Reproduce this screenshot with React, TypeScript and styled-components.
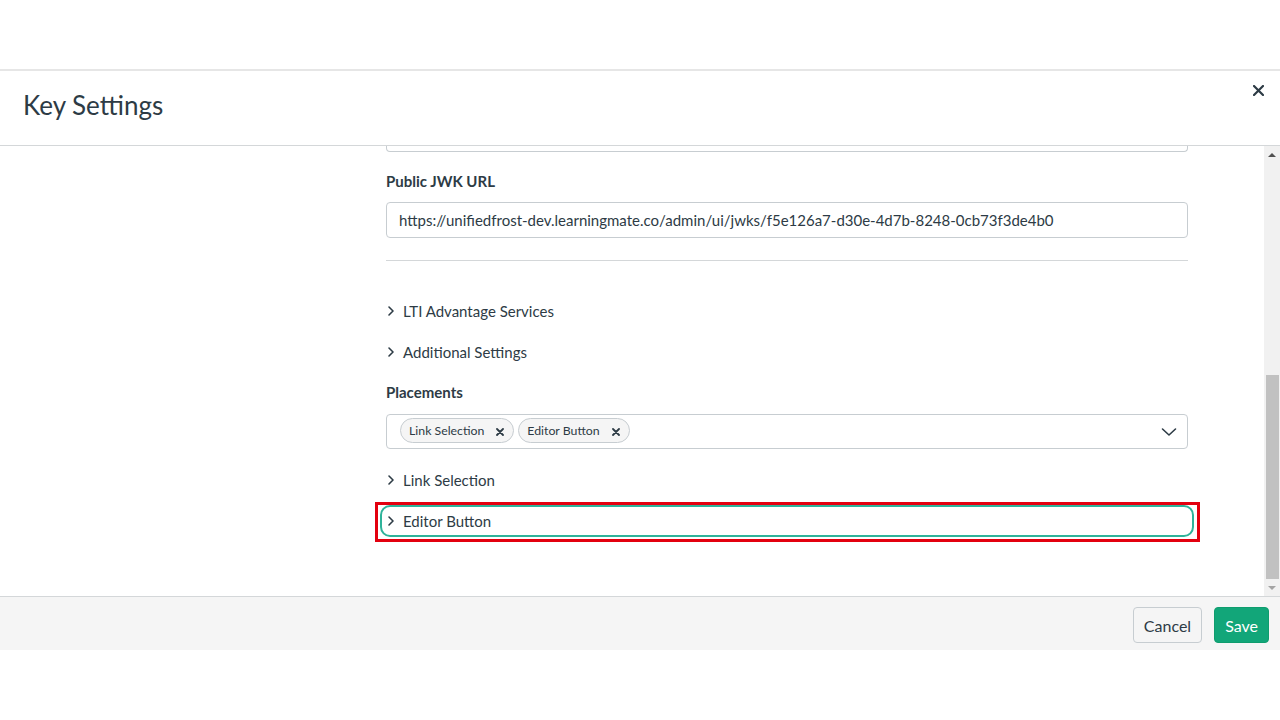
import React from 'react';
import styled, {createGlobalStyle} from 'styled-components';

const TEXT = '#2d3b45';
const BORDER = '#c7cdd1';

const Global = createGlobalStyle`
  html, body {
    margin: 0;
    padding: 0;
    background: #fff;
    font-family: Lato, 'Noto Sans', sans-serif;
    color: ${TEXT};
    -webkit-font-smoothing: antialiased;
  }
`;

const Page = styled.div`
  width: 1280px;
  height: 720px;
  overflow: hidden;
  display: flex;
  flex-direction: column;
`;

const TopSpace = styled.div`
  height: 69px;
  flex: 0 0 auto;
`;

const Modal = styled.div`
  border-top: 2px solid #e6e6e6;
  display: flex;
  flex-direction: column;
`;

const Header = styled.div`
  height: 74px;
  border-bottom: 1px solid #d4d7d9;
  display: flex;
  align-items: center;
  justify-content: space-between;
  padding: 0 14px 0 23px;
`;

const Title = styled.h2`
  margin: 0;
  font-size: 26px;
  font-weight: 400;
  margin-top: -6px;
`;

const CloseBtn = styled.button`
  border: none;
  background: none;
  padding: 0;
  width: 16px;
  height: 16px;
  align-self: flex-start;
  margin-top: 11px;
  color: ${TEXT};
  display: flex;
  align-items: center;
  justify-content: center;
`;

const Body = styled.div`
  height: 450px;
  display: flex;
`;

const Content = styled.div`
  flex: 1;
  overflow: hidden;
  padding-left: 386px;
  padding-right: 76px;
`;

const Column = styled.div`
  width: 802px;
  display: flex;
  flex-direction: column;
`;

const PartialInput = styled.div`
  height: 5px;
  border: 1px solid ${BORDER};
  border-top: none;
  border-radius: 0 0 4px 4px;
`;

const Label = styled.div<{ top: number }>`
  margin-top: ${p => p.top}px;
  font-size: 15px;
  font-weight: 700;
  line-height: 20px;
`;

const Input = styled.div`
  margin-top: 11px;
  height: 34px;
  border: 1px solid ${BORDER};
  border-radius: 4px;
  display: flex;
  align-items: center;
  padding: 0 12px;
  font-size: 15px;
  white-space: nowrap;
`;

const Divider = styled.div`
  margin-top: 22px;
  height: 1px;
  background: #d4d7d9;
`;

const Toggle = styled.div<{ top: number; focused?: boolean }>`
  position: relative;
  margin-top: ${p => p.top}px;
  height: 20px;
  display: flex;
  align-items: center;
  gap: 8px;
  font-size: 15px;
  line-height: 20px;
  padding-left: 1px;
  border-radius: 4px;
  outline: ${p => (p.focused ? '2px solid #2fb39a' : 'none')};
  outline-offset: 4px;
`;

const Annotation = styled.div`
  position: absolute;
  top: -9px;
  bottom: -11px;
  left: -11px;
  right: -12px;
  border: 3px solid #e3000f;
  pointer-events: none;
`;

const Select = styled.div`
  margin-top: 12px;
  height: 33px;
  border: 1px solid ${BORDER};
  border-radius: 4px;
  display: flex;
  align-items: center;
  padding: 0 10px 0 13px;
  gap: 4px;
`;

const Chip = styled.span`
  height: 23px;
  border: 1px solid ${BORDER};
  background: #f5f5f5;
  border-radius: 13px;
  display: inline-flex;
  align-items: center;
  padding: 0 9px 0 8px;
  gap: 12px;
  font-size: 12.3px;
  margin-top: -2px;
`;

const ChipX = styled.span`
  display: flex;
  margin-top: 3px;
`;

const SelectArrow = styled.span`
  margin-left: auto;
  display: flex;
  align-items: center;
`;

const Scrollbar = styled.div`
  width: 16px;
  background: #f1f1f1;
  display: flex;
  flex-direction: column;
  align-items: center;
`;

const ScrollArrow = styled.div<{ down?: boolean }>`
  height: 17px;
  width: 100%;
  display: flex;
  align-items: center;
  justify-content: center;
  &::before {
    content: '';
    border-left: 4px solid transparent;
    border-right: 4px solid transparent;
    ${p => (p.down ? 'border-top: 4px solid #a3a3a3;' : 'border-bottom: 4px solid #505050;')}
  }
`;

const Track = styled.div`
  flex: 1;
  width: 100%;
  display: flex;
  flex-direction: column;
  justify-content: flex-end;
`;

const Thumb = styled.div`
  height: 204px;
  margin: 0 1px 0 2px;
  background: #c1c1c1;
`;

const Footer = styled.div`
  height: 53px;
  border-top: 1px solid #d4d7d9;
  background: #f5f5f5;
  display: flex;
  align-items: center;
  justify-content: flex-end;
  gap: 12px;
  padding: 0 11px 0 0;
`;

const Button = styled.button<{ primary?: boolean }>`
  height: 36px;
  padding: 0 10px;
  border-radius: 4px;
  font-family: Lato, 'Noto Sans', sans-serif;
  font-size: 16px;
  border: 1px solid ${p => (p.primary ? '#0f9d6e' : BORDER)};
  background: ${p => (p.primary ? '#12a679' : '#f5f5f5')};
  color: ${p => (p.primary ? '#fff' : TEXT)};
  margin-top: 3px;
`;

const Chevron = ({size = 8}: { size?: number }) => (
  <svg width={size} height={size * 1.5} viewBox="0 0 8 12" fill="none">
    <path d="M2 2l4 4-4 4" stroke={TEXT} strokeWidth="1.6" strokeLinecap="round" strokeLinejoin="round"/>
  </svg>
);

const SmallX = () => (
  <svg width="8" height="8" viewBox="0 0 8 8">
    <path d="M1 1l6 6M7 1L1 7" stroke={TEXT} strokeWidth="1.8" strokeLinecap="round"/>
  </svg>
);

const ToggleRow = ({title, top, focused}: { title: string; top: number; focused?: boolean }) => (
  <Toggle top={top} focused={focused}>
    <Chevron/>
    <span>{title}</span>
    {focused && <Annotation/>}
  </Toggle>
);

export default function App() {
  return (
    <Page>
      <Global/>
      <TopSpace/>
      <Modal>
        <Header>
          <Title>Key Settings</Title>
          <CloseBtn aria-label="Close">
            <svg width="11" height="11" viewBox="0 0 11 11">
              <path d="M1 1l9 9M10 1l-9 9" stroke={TEXT} strokeWidth="2.2" strokeLinecap="round"/>
            </svg>
          </CloseBtn>
        </Header>
        <Body>
          <Content>
            <Column>
              <PartialInput/>
              <Label top={19}>Public JWK URL</Label>
              <Input>https://unifiedfrost-dev.learningmate.co/admin/ui/jwks/f5e126a7-d30e-4d7b-8248-0cb73f3de4b0</Input>
              <Divider/>
              <ToggleRow title="LTI Advantage Services" top={40}/>
              <ToggleRow title="Additional Settings" top={21}/>
              <Label top={20}>Placements</Label>
              <Select>
                <Chip>Link Selection <ChipX><SmallX/></ChipX></Chip>
                <Chip>Editor Button <ChipX><SmallX/></ChipX></Chip>
                <SelectArrow>
                  <svg width="16" height="10" viewBox="0 0 16 10" fill="none">
                    <path d="M1.5 2l6.5 6 6.5-6" stroke={TEXT} strokeWidth="1.6" strokeLinecap="round" strokeLinejoin="round"/>
                  </svg>
                </SelectArrow>
              </Select>
              <ToggleRow title="Link Selection" top={21}/>
              <ToggleRow title="Editor Button" top={21} focused/>
            </Column>
          </Content>
          <Scrollbar>
            <ScrollArrow/>
            <Track>
              <Thumb/>
            </Track>
            <ScrollArrow down/>
          </Scrollbar>
        </Body>
        <Footer>
          <Button>Cancel</Button>
          <Button primary>Save</Button>
        </Footer>
      </Modal>
    </Page>
  );
}
